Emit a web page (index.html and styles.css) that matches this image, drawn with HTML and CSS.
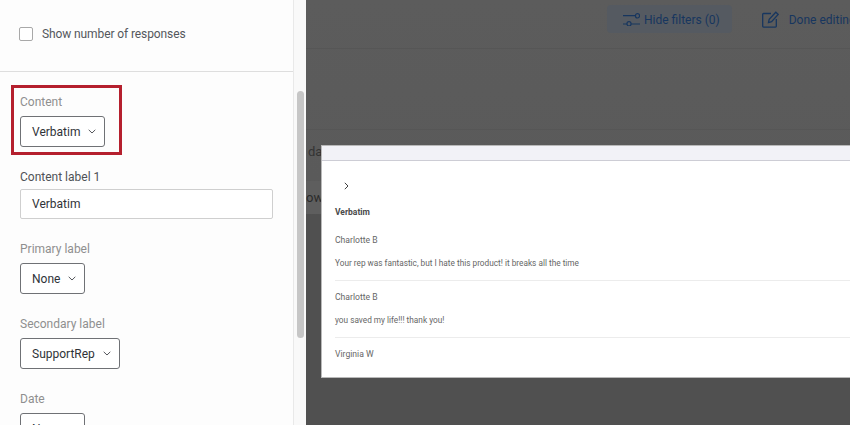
FILE: index.html
```html
<!DOCTYPE html>
<html lang="en">
<head>
<meta charset="utf-8">
<title>Verbatim widget settings</title>
<link rel="stylesheet" href="styles.css">
</head>
<body>
<div class="app">
  <aside class="sidebar">
    <div class="panel">
      <section class="top-section">
        <label class="check-row"><span class="checkbox"></span><span>Show number of responses</span></label>
      </section>
      <section class="fields">
        <div class="field">
          <div class="label muted">Content</div>
          <button class="select">Verbatim<svg class="chev" viewBox="0 0 8 5"><path d="M.7.8 4 4 7.3.8"/></svg></button>
        </div>
        <div class="field">
          <div class="label label-tight">Content label 1</div>
          <div class="input">Verbatim</div>
        </div>
        <div class="field">
          <div class="label muted">Primary label</div>
          <button class="select">None<svg class="chev" viewBox="0 0 8 5"><path d="M.7.8 4 4 7.3.8"/></svg></button>
        </div>
        <div class="field">
          <div class="label muted">Secondary label</div>
          <button class="select">SupportRep<svg class="chev" viewBox="0 0 8 5"><path d="M.7.8 4 4 7.3.8"/></svg></button>
        </div>
        <div class="field">
          <div class="label muted">Date</div>
          <button class="select">None<svg class="chev" viewBox="0 0 8 5"><path d="M.7.8 4 4 7.3.8"/></svg></button>
        </div>
      </section>
    </div>
    <div class="scroll-track"><div class="scroll-thumb"></div></div>
    <div class="highlight"></div>
  </aside>
  <main class="stage">
    <header class="toolbar">
      <div class="tool tool-active">
        <svg class="tool-icon" viewBox="0 0 17 13"><path d="M0 2.7h12.5M0 11h4M8 11h9"/><rect x="12.5" y=".6" width="4" height="4.4" rx="2"/><rect x="4" y="8.6" width="4" height="4.4" rx="2"/></svg>
        <span class="tool-text">Hide filters (0)</span>
      </div>
      <div class="tool-sep"></div>
      <div class="tool">
        <svg class="edit-icon" viewBox="0 0 17 17"><path d="M9 2.5H1.5a.8.8 0 0 0-.8.8v12a.8.8 0 0 0 .8.8h12a.8.8 0 0 0 .8-.8V8"/><path d="M6.5 11.5 7.2 8.2 13.8 1.2l2.4 2.3-6.6 7.1z"/></svg>
        <span class="tool-text">Done editing</span>
      </div>
    </header>
    <div class="band"></div>
    <div class="back-text">da</div>
    <div class="back-row">ow</div>
    <div class="modal">
      <div class="modal-head"></div>
      <div class="modal-body">
        <svg class="expander" viewBox="0 0 5 8"><path d="M.8.8 4 4 .8 7.2"/></svg>
        <h2 class="verbatim-title">Verbatim</h2>
        <div class="entry"><div class="entry-name">Charlotte B</div><p class="entry-text">Your rep was fantastic, but I hate this product! it breaks all the time</p></div>
        <div class="entry"><div class="entry-name">Charlotte B</div><p class="entry-text">you saved my life!!! thank you!</p></div>
        <div class="entry entry-last"><div class="entry-name">Virginia W</div></div>
      </div>
    </div>
  </main>
</div>
</body>
</html>
```
FILE: styles.css
```css
* { box-sizing: border-box; }
html, body { margin: 0; height: 100%; overflow: hidden; }
body { font-family: Roboto, "Liberation Sans", sans-serif; background: #505050; color: #2f3338; }
.app { display: flex; width: 850px; height: 425px; overflow: hidden; }
.sidebar { position: relative; flex: 0 0 306px; display: flex; background: #fcfcfc; }
.panel { flex: 0 0 294px; border-right: 1px solid #e9e9e9; background: #fdfdfd; }
.top-section { height: 72px; padding: 27px 0 0 19px; border-bottom: 1px solid #dedede; }
.check-row { display: flex; align-items: center; gap: 9px; font-size: 12px; letter-spacing: -.1px; line-height: 14px; color: #54575c; }
.checkbox { width: 14px; height: 14px; border: 1px solid #a8a8a8; border-radius: 2px; background: #fff; }
.fields { padding: 21px 0 0 20px; }
.field { margin-bottom: 21px; }
.label { padding-top: 1px; font-size: 12px; line-height: 17px; margin-bottom: 5px; color: #4f5256; }
.label.muted { color: #8f8f8f; }
.label.label-tight { margin-bottom: 3px; }
.select { display: inline-flex; align-items: center; height: 31px; padding: 0 8px 0 11px; border: 1px solid #6f7175; border-radius: 3px; background: #fff; font: inherit; font-size: 12px; color: #2f3338; }
.chev { width: 8px; height: 5px; margin-left: 8px; fill: none; stroke: #54575c; stroke-width: 1; }
.input { width: 253px; height: 30px; padding: 0 11px; border: 1px solid #cfcfcf; border-radius: 2px; background: #fff; font-size: 12px; line-height: 28px; }
.scroll-track { flex: 1; position: relative; background: #f9f9f9; }
.scroll-thumb { position: absolute; left: 3px; top: 91px; width: 7px; height: 247px; border-radius: 4px; background: #c6c6c6; }
.highlight { position: absolute; left: 11px; top: 85px; width: 111px; height: 70px; border: 3px solid #b5202e; pointer-events: none; }
.stage { position: relative; flex: 1; min-width: 0; background: linear-gradient(#5c5c5c 0, #5a5a5a 180px, #505050 215px); }
.toolbar { display: flex; align-items: flex-start; height: 49px; border-bottom: 1px solid #565656; padding: 5px 0 0 301px; white-space: nowrap; font-size: 12px; color: #17365f; }
.tool { display: flex; align-items: center; gap: 4px; height: 28px; }
.tool-text { padding-top: 2px; }
.tool-active { padding: 0 12px 0 16px; background: #555a61; border-radius: 4px; }
.tool-sep { width: 1px; height: 21px; margin: 4px 23px 0 7px; background: #565656; }
.tool-icon { width: 17px; height: 13px; fill: none; stroke: #17365f; stroke-width: 1.2; }
.edit-icon { width: 17px; height: 17px; margin-right: 6px; fill: none; stroke: #17365f; stroke-width: 1.3; }
.band { height: 81px; border-bottom: 1px solid #565656; }
.back-text { position: absolute; left: 2px; top: 143px; font-size: 13px; line-height: 17px; color: #333; }
.back-row { position: absolute; left: 0; top: 181px; width: 60px; height: 33px; background: #5e5e5e; font-size: 13px; line-height: 34px; color: #2b2b2b; }
.modal { position: absolute; left: 15px; top: 145px; width: 620px; height: 233px; background: #fff; border: 1px solid #b9b9b9; }
.modal-head { height: 15px; background: #f2f2f7; border-bottom: 1px solid #cdcdd5; }
.modal-body { padding: 21px 0 0 13px; }
.expander { display: block; width: 5px; height: 8px; margin: 0 0 16px 9px; fill: none; stroke: #404040; stroke-width: 1; }
.verbatim-title { margin: 0 0 16px; font-size: 8.5px; line-height: 12px; font-weight: 700; color: #4a4a4a; }
.entry { border-bottom: 1px solid #ececec; margin-bottom: 10px; height: 47px; }
.entry-last { border: 0; }
.entry-name { font-size: 8.6px; line-height: 12px; color: #666; }
.entry-text { margin: 11px 0 0; font-size: 8.25px; line-height: 12px; color: #666; }
```
